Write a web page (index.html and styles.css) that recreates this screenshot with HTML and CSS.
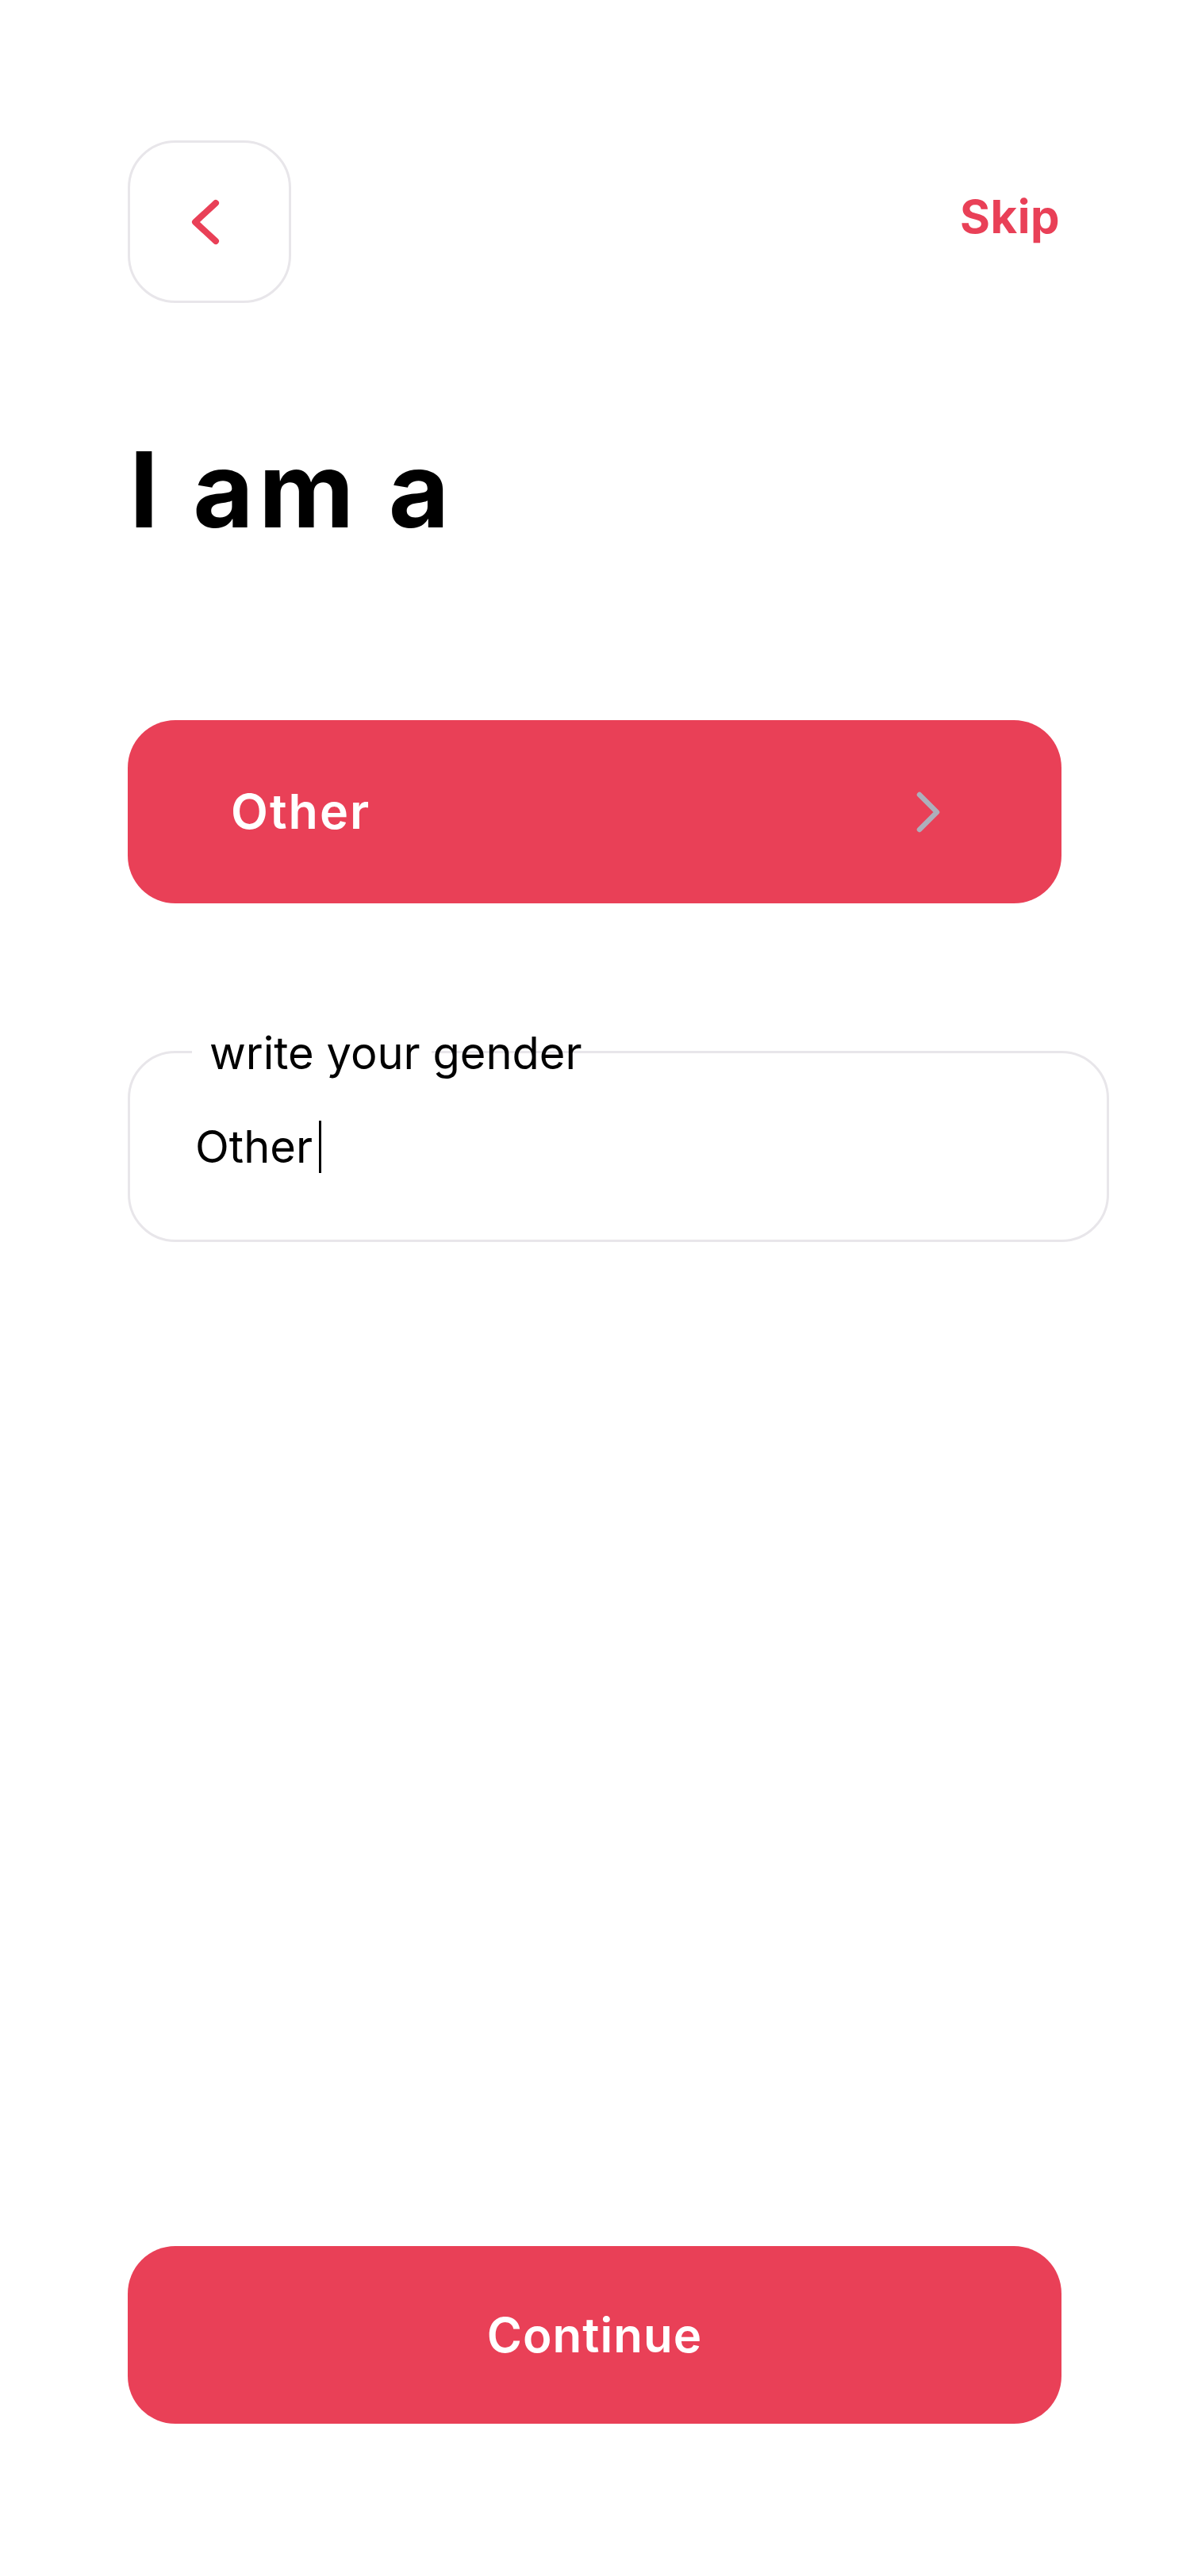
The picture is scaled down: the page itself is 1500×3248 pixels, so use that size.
FILE: index.html
```html
<!DOCTYPE html>
<html lang="en">
<head>
<meta charset="utf-8">
<title>I am a</title>
<link rel="stylesheet" href="styles.css">
</head>
<body>
<main class="screen">
  <header class="topbar">
    <button class="back-btn" type="button" aria-label="Back">
      <svg width="40" height="64" viewBox="0 0 40 64" aria-hidden="true">
        <path d="M31 8 L5 32 L31 56" fill="none" stroke="#E94057" stroke-width="8" stroke-linecap="round" stroke-linejoin="round"/>
      </svg>
    </button>
    <a class="skip" href="#">Skip</a>
  </header>

  <h1 class="title">I am a</h1>

  <button class="choice" type="button">
    <span class="choice-label">Other</span>
    <svg class="choice-chevron" width="36" height="56" viewBox="0 0 36 56" aria-hidden="true">
      <path d="M7 6 L29 28 L7 50" fill="none" stroke="#ADAFBB" stroke-width="6.5" stroke-linecap="round" stroke-linejoin="round"/>
    </svg>
  </button>

  <div class="field">
    <span class="field-label">write your gender</span>
    <div class="field-value"><span>Other</span><span class="caret"></span></div>
  </div>

  <button class="continue" type="button">Continue</button>
</main>
</body>
</html>
```

FILE: styles.css
```css
* { box-sizing: border-box; }

html, body {
  margin: 0;
  padding: 0;
  background: #ffffff;
}

body {
  font-family: Inter, "Noto Sans", "Liberation Sans", sans-serif;
  color: #000000;
}

.screen {
  width: 1500px;
  min-height: 3248px;
  padding: 177px 0 192px 161px;
  display: flex;
  flex-direction: column;
  align-items: flex-start;
}

.topbar {
  width: 1177px;
  display: flex;
  justify-content: space-between;
  align-items: flex-start;
}

.back-btn {
  width: 206px;
  height: 205px;
  border: 3px solid #E8E6EA;
  border-radius: 60px;
  background: #ffffff;
  display: flex;
  align-items: center;
  justify-content: center;
  padding: 0 6px 0 0;
  margin: 0;
}

.back-btn svg { display: block; }

.skip {
  margin-top: 67px;
  margin-right: 2px;
  font-size: 58px;
  line-height: 1;
  font-weight: 700;
  letter-spacing: 0.5px;
  color: #E94057;
  text-decoration: none;
}

.title {
  margin: 169px 0 0 0;
  font-size: 132px;
  line-height: 1;
  font-weight: 700;
  letter-spacing: 6px;
  padding-left: 2px;
}

.choice {
  margin-top: 225px;
  width: 1177px;
  height: 231px;
  border: none;
  border-radius: 60px;
  background: #E94057;
  display: flex;
  align-items: center;
  justify-content: space-between;
  padding: 0 150px 0 130px;
  font-family: inherit;
  cursor: pointer;
}

.choice-label {
  color: #ffffff;
  font-size: 61px;
  font-weight: 600;
  line-height: 1;
  letter-spacing: 2px;
}

.choice-chevron { display: block; }

.field {
  position: relative;
  margin-top: 186px;
  width: 1237px;
  height: 241px;
  border: 3px solid #E8E6EA;
  border-radius: 60px;
  display: flex;
  align-items: center;
  padding-left: 82px;
}

.field-label {
  position: absolute;
  top: -28px;
  left: 78px;
  width: 302px;
  padding-left: 22px;
  background: #ffffff;
  white-space: nowrap;
  font-size: 56px;
  line-height: 56px;
  font-weight: 400;
  color: #000000;
}

.field-value {
  display: flex;
  align-items: center;
  font-size: 56px;
  line-height: 56px;
  font-weight: 400;
}

.caret {
  display: inline-block;
  width: 3px;
  height: 66px;
  margin-left: 8px;
  background: #000000;
}

.continue {
  margin-top: auto;
  width: 1177px;
  height: 224px;
  border: none;
  border-radius: 60px;
  background: #E94057;
  color: #ffffff;
  font-family: inherit;
  font-size: 60px;
  font-weight: 600;
  line-height: 1;
  letter-spacing: 1px;
  cursor: pointer;
}
```
